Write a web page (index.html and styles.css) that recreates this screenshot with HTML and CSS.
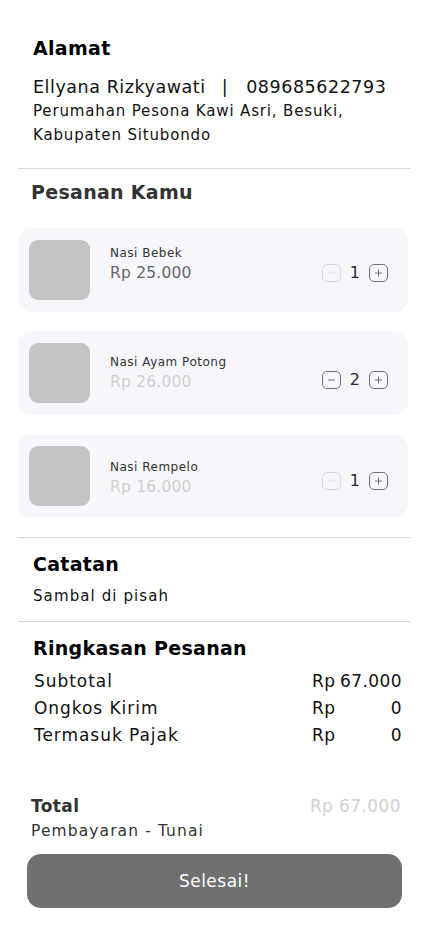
FILE: index.html
```html
<!DOCTYPE html>
<html lang="id">
<head>
<meta charset="utf-8">
<title>Checkout</title>
<link rel="stylesheet" href="styles.css">
</head>
<body>
<main class="page">
  <section class="address">
    <h2 class="title">Alamat</h2>
    <p class="contact"><span>Ellyana Rizkyawati</span><span class="sep">|</span><span>089685622793</span></p>
    <p class="street">Perumahan Pesona Kawi Asri, Besuki,<br>Kabupaten Situbondo</p>
  </section>
  <hr class="divider">
  <section class="orders">
    <h2 class="title title-muted">Pesanan Kamu</h2>
    <ul class="items">
      <li class="item item-first">
        <div class="thumb"></div>
        <div class="info">
          <div class="name">Nasi Bebek</div>
          <div class="price">Rp 25.000</div>
        </div>
        <div class="stepper">
          <span class="step step-off"><svg viewBox="0 0 19 18"><path d="M6 9h7"/></svg></span>
          <span class="qty">1</span>
          <span class="step"><svg viewBox="0 0 19 18"><path d="M6 9h7M9.5 5.5v7"/></svg></span>
        </div>
      </li>
      <li class="item item-second">
        <div class="thumb"></div>
        <div class="info">
          <div class="name">Nasi Ayam Potong</div>
          <div class="price price-light">Rp 26.000</div>
        </div>
        <div class="stepper">
          <span class="step"><svg viewBox="0 0 19 18"><path d="M6 9h7"/></svg></span>
          <span class="qty">2</span>
          <span class="step"><svg viewBox="0 0 19 18"><path d="M6 9h7M9.5 5.5v7"/></svg></span>
        </div>
      </li>
      <li class="item item-third">
        <div class="thumb"></div>
        <div class="info">
          <div class="name">Nasi Rempelo</div>
          <div class="price price-light">Rp 16.000</div>
        </div>
        <div class="stepper">
          <span class="step step-off"><svg viewBox="0 0 19 18"><path d="M6 9h7"/></svg></span>
          <span class="qty">1</span>
          <span class="step"><svg viewBox="0 0 19 18"><path d="M6 9h7M9.5 5.5v7"/></svg></span>
        </div>
      </li>
    </ul>
  </section>
  <hr class="divider">
  <section class="notes">
    <h2 class="title">Catatan</h2>
    <p class="note-text">Sambal di pisah</p>
  </section>
  <hr class="divider">
  <section class="summary">
    <h2 class="title">Ringkasan Pesanan</h2>
    <div class="row"><span class="label">Subtotal</span><span class="val"><span>Rp</span><span>67.000</span></span></div>
    <div class="row"><span class="label">Ongkos Kirim</span><span class="val"><span>Rp</span><span>0</span></span></div>
    <div class="row"><span class="label">Termasuk Pajak</span><span class="val"><span>Rp</span><span>0</span></span></div>
  </section>
  <section class="total">
    <div class="total-row"><span class="total-label">Total</span><span class="total-val">Rp 67.000</span></div>
    <p class="payment">Pembayaran - Tunai</p>
    <button class="btn" type="button">Selesai!</button>
  </section>
</main>
</body>
</html>
```

FILE: styles.css
```css
* { box-sizing: border-box; }
html, body {
  margin: 0;
  padding: 0;
  background: #fff;
}
body {
  font-family: "DejaVu Sans", "Noto Sans", sans-serif;
  color: #111;
}
.page {
  width: 430px;
  padding-bottom: 33px;
}
p { margin: 0; }
.title {
  margin: 0;
  font-size: 19px;
  line-height: 24px;
  font-weight: 700;
  color: #000;
  letter-spacing: 0.3px;
}
.title-muted { color: #333; }

.address {
  padding: 36px 33px 0;
}
.contact {
  margin-top: 15px;
  font-size: 17.5px;
  line-height: 24px;
  letter-spacing: 0.55px;
  display: flex;
}
.contact .sep { margin: 0 18px 0 16px; }
.street {
  font-size: 15px;
  line-height: 24px;
  letter-spacing: 0.85px;
}

.divider {
  border: 0;
  border-top: 1px solid #d9d9d9;
  margin: 21px 20px 0 18px;
}

.orders {
  padding: 11px 22px 0 18px;
}
.orders .title { padding-left: 13px; }
.items {
  list-style: none;
  margin: 24px 0 0;
  padding: 0;
  display: flex;
  flex-direction: column;
  gap: 19px;
}
.item {
  display: flex;
  align-items: center;
  height: 84px;
  padding: 12px 20px 12px 11px;
  background: #f7f7fb;
  border-radius: 14px;
}
.thumb {
  width: 61px;
  height: 60px;
  border-radius: 9px;
  background: #c4c4c4;
  flex: none;
}
.info {
  flex: 1;
  margin-left: 20px;
}
.item-first .info { margin-top: -12px; }
.item-third .info { margin-top: 4px; }
.name {
  font-size: 12px;
  line-height: 18px;
  color: #333;
  letter-spacing: 0.5px;
}
.price {
  font-size: 15.5px;
  line-height: 22px;
  color: #666;
  letter-spacing: 0.2px;
}
.price-light { color: #cfcfcf; }
.stepper {
  display: flex;
  align-items: center;
  gap: 9px;
}
.item-first .stepper { margin-top: 5px; }
.item-second .stepper { margin-top: 14px; }
.item-third .stepper { margin-top: 10px; }
.step {
  width: 19px;
  height: 18px;
  border: 1px solid #707070;
  border-radius: 5px;
  display: flex;
}
.step svg {
  width: 100%;
  height: 100%;
  fill: none;
  stroke: #707070;
  stroke-width: 1.1;
  stroke-linecap: round;
}
.step-off { border-color: #d5dbe3; }
.step-off svg { stroke: #d5dbe3; }
.qty {
  font-size: 16px;
  line-height: 20px;
  color: #1d2b3a;
  min-width: 10px;
  text-align: center;
}

.orders + .divider { margin-top: 19px; }

.notes {
  padding: 14px 33px 0;
}
.note-text {
  margin-top: 9px;
  font-size: 15px;
  line-height: 22px;
  letter-spacing: 1.1px;
  color: #111;
}
.notes + .divider { margin-top: 14px; }

.summary {
  padding: 14px 28px 0 34px;
}
.summary .title { margin-left: -1px; }
.row {
  display: flex;
  justify-content: space-between;
  font-size: 17px;
  line-height: 27px;
  color: #111;
}
.label { letter-spacing: 0.95px; }
.summary .title + .row { margin-top: 8px; }
.val {
  width: 90px;
  display: flex;
  justify-content: space-between;
  letter-spacing: 0.4px;
}

.total {
  padding: 45px 29px 0 31px;
}
.total-row {
  display: flex;
  justify-content: space-between;
  line-height: 24px;
}
.total-label {
  font-size: 17px;
  font-weight: 700;
  color: #333;
  letter-spacing: 0.4px;
}
.total-val {
  font-size: 17px;
  color: #d0d0d0;
  letter-spacing: 0.4px;
}
.payment {
  margin-top: 2px;
  font-size: 15.5px;
  line-height: 22px;
  color: #333;
  letter-spacing: 1.1px;
}
.btn {
  display: block;
  margin: 12px 0 0 -4px;
  width: 375px;
  height: 54px;
  border: 0;
  border-radius: 14px;
  background: #707070;
  color: #fff;
  font-family: inherit;
  font-size: 17px;
  letter-spacing: 0.5px;
}
```
